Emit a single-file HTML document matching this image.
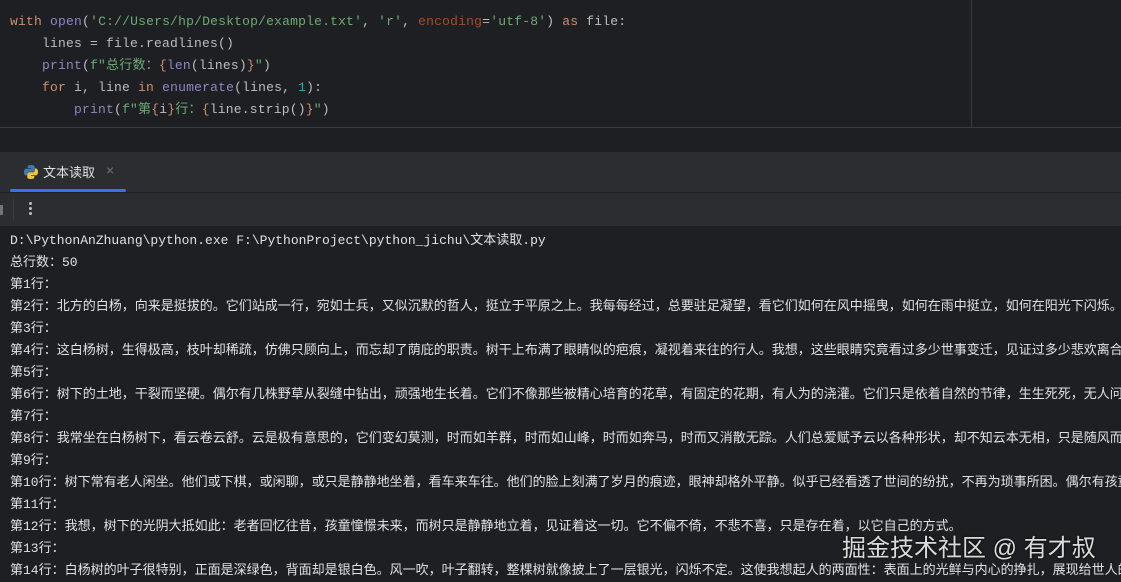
<!DOCTYPE html>
<html><head><meta charset="utf-8">
<style>
*{margin:0;padding:0;box-sizing:border-box}
body{width:1121px;height:578px;overflow:hidden;background:#1e1f22;position:relative;font-family:"Liberation Mono","Noto Sans CJK SC",monospace;font-size:13px}
.ed{position:absolute;left:0;top:0;width:1121px;height:128px;background:#1e1f22;border-bottom:1px solid #393b40}
.vl{position:absolute;left:971px;top:0;width:1px;height:128px;background:#393b40}
.cl{position:absolute;left:10px;white-space:pre;color:#bcbec4;line-height:22px;letter-spacing:0.2px}
.k{color:#cf8e6d}.s{color:#6aab73}.b{color:#8888c6}.n{color:#2aacb8}.p{color:#aa4926}
.tabs{position:absolute;left:0;top:152px;width:1121px;height:41px;background:#2b2d30;border-bottom:1px solid #1e1f22}
.tb{position:absolute;left:0;top:193px;width:1121px;height:34px;background:#2b2d30;border-bottom:1px solid #1e1f22}
.con{position:absolute;left:10px;top:230px;color:#dfe1e5;white-space:nowrap;line-height:22px;font-family:"Liberation Mono","Noto Sans CJK SC",monospace}
.wm{position:absolute;left:842px;top:528px;font-family:"Liberation Sans","Noto Sans CJK SC",sans-serif;font-size:24px;color:rgba(255,255,255,0.85);text-shadow:0 0 2px #000;white-space:nowrap}
</style></head><body>
<div class="ed"><div class="vl"></div>
<div class="cl" style="top:11px"><span class="k">with</span> <span class="b">open</span>(<span class="s">'C://Users/hp/Desktop/example.txt'</span>, <span class="s">'r'</span>, <span class="p">encoding</span>=<span class="s">'utf-8'</span>) <span class="k">as</span> file:</div>
<div class="cl" style="top:33px">    lines = file.readlines()</div>
<div class="cl" style="top:55px">    <span class="b">print</span>(<span class="s">f"总行数：</span><span class="k">{</span><span class="b">len</span>(lines)<span class="k">}</span><span class="s">"</span>)</div>
<div class="cl" style="top:77px">    <span class="k">for</span> i, line <span class="k">in</span> <span class="b">enumerate</span>(lines, <span class="n">1</span>):</div>
<div class="cl" style="top:99px">        <span class="b">print</span>(<span class="s">f"第</span><span class="k">{</span>i<span class="k">}</span><span class="s">行：</span><span class="k">{</span>line.strip()<span class="k">}</span><span class="s">"</span>)</div>
</div>
<div class="tabs">
<svg style="position:absolute;left:23px;top:12px" width="16" height="16" viewBox="0 0 16 16"><path d="M8 1C4.5 1 4.7 2.5 4.7 2.5V4h3.4v.6H3.3S1 4.4 1 8s2 3.5 2 3.5h1.2V9.8S4.1 7.7 6.3 7.7h3.4s2 0 2-2V2.8S12 1 8 1z" fill="#3d7ab8"/><path d="M8 15c3.5 0 3.3-1.5 3.3-1.5V12H7.9v-.6h4.8S15 11.6 15 8s-2-3.5-2-3.5h-1.2v1.7s.1 2.1-2.1 2.1H6.3s-2 0-2 2v2.9S4 15 8 15z" fill="#f0c53c"/></svg>
<div style="position:absolute;left:43px;top:10px;color:#dfe1e5;font-family:'Liberation Sans','Noto Sans CJK SC',sans-serif;font-size:13px">文本读取</div>
<div style="position:absolute;left:106px;top:10px;color:#6f737a;font-family:'Liberation Sans',sans-serif;font-size:14px">×</div>
<div style="position:absolute;left:10px;top:37px;width:116px;height:3px;background:#3574f0;border-radius:2px"></div>
</div>
<div class="tb">
<div style="position:absolute;left:0;top:12px;width:3px;height:10px;background:#6f737a"></div>
<div style="position:absolute;left:13px;top:6px;width:1px;height:22px;background:#393b40"></div>
<div style="position:absolute;left:29px;top:9px;width:3px;height:3px;background:#bcbec4;border-radius:2px;box-shadow:0 5px 0 #bcbec4,0 10px 0 #bcbec4"></div>
</div>
<div class="con">
D:\PythonAnZhuang\python.exe F:\PythonProject\python_jichu\文本读取.py<br>
总行数：50<br>
第1行：<br>
第2行：北方的白杨，向来是挺拔的。它们站成一行，宛如士兵，又似沉默的哲人，挺立于平原之上。我每每经过，总要驻足凝望，看它们如何在风中摇曳，如何在雨中挺立，如何在阳光下闪烁。<br>
第3行：<br>
第4行：这白杨树，生得极高，枝叶却稀疏，仿佛只顾向上，而忘却了荫庇的职责。树干上布满了眼睛似的疤痕，凝视着来往的行人。我想，这些眼睛究竟看过多少世事变迁，见证过多少悲欢离合<br>
第5行：<br>
第6行：树下的土地，干裂而坚硬。偶尔有几株野草从裂缝中钻出，顽强地生长着。它们不像那些被精心培育的花草，有固定的花期，有人为的浇灌。它们只是依着自然的节律，生生死死，无人问<br>
第7行：<br>
第8行：我常坐在白杨树下，看云卷云舒。云是极有意思的，它们变幻莫测，时而如羊群，时而如山峰，时而如奔马，时而又消散无踪。人们总爱赋予云以各种形状，却不知云本无相，只是随风而<br>
第9行：<br>
第10行：树下常有老人闲坐。他们或下棋，或闲聊，或只是静静地坐着，看车来车往。他们的脸上刻满了岁月的痕迹，眼神却格外平静。似乎已经看透了世间的纷扰，不再为琐事所困。偶尔有孩童<br>
第11行：<br>
第12行：我想，树下的光阴大抵如此：老者回忆往昔，孩童憧憬未来，而树只是静静地立着，见证着这一切。它不偏不倚，不悲不喜，只是存在着，以它自己的方式。<br>
第13行：<br>
第14行：白杨树的叶子很特别，正面是深绿色，背面却是银白色。风一吹，叶子翻转，整棵树就像披上了一层银光，闪烁不定。这使我想起人的两面性：表面上的光鲜与内心的挣扎，展现给世人的
</div>
<div class="wm">掘金技术社区 @ 有才叔</div>
</body></html>
